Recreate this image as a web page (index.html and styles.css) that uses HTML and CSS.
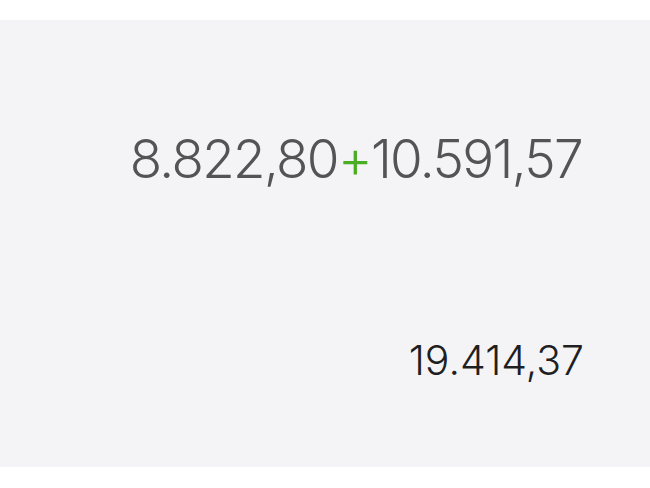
FILE: index.html
```html
<!DOCTYPE html>
<html>
<head>
<meta charset="utf-8">
<link rel="stylesheet" href="styles.css">
</head>
<body>
<div class="screen">
  <div class="expr">8.822,80<span class="op">+</span>10.591,57</div>
  <div class="result">19.414,37</div>
</div>
</body>
</html>
```
FILE: styles.css
```css
html, body {
  margin: 0;
  padding: 0;
  background: #ffffff;
}
body {
  padding: 20px 0 21px;
  font-family: Inter, "Noto Sans", sans-serif;
}
.screen {
  background: #f4f4f7;
  height: 447px;
  display: flex;
  flex-direction: column;
  align-items: flex-end;
  padding-right: 68px;
  box-sizing: border-box;
}
.expr {
  margin-top: 108px;
  font-size: 53px;
  font-weight: 300;
  color: #545458;
  line-height: 1.2;
  letter-spacing: -1.65px;
}
.op {
  color: #4aae24;
}
.result {
  margin-top: 144px;
  margin-right: -2px;
  font-size: 41px;
  font-weight: 300;
  color: #1f1f22;
  line-height: 1.2;
}
```
